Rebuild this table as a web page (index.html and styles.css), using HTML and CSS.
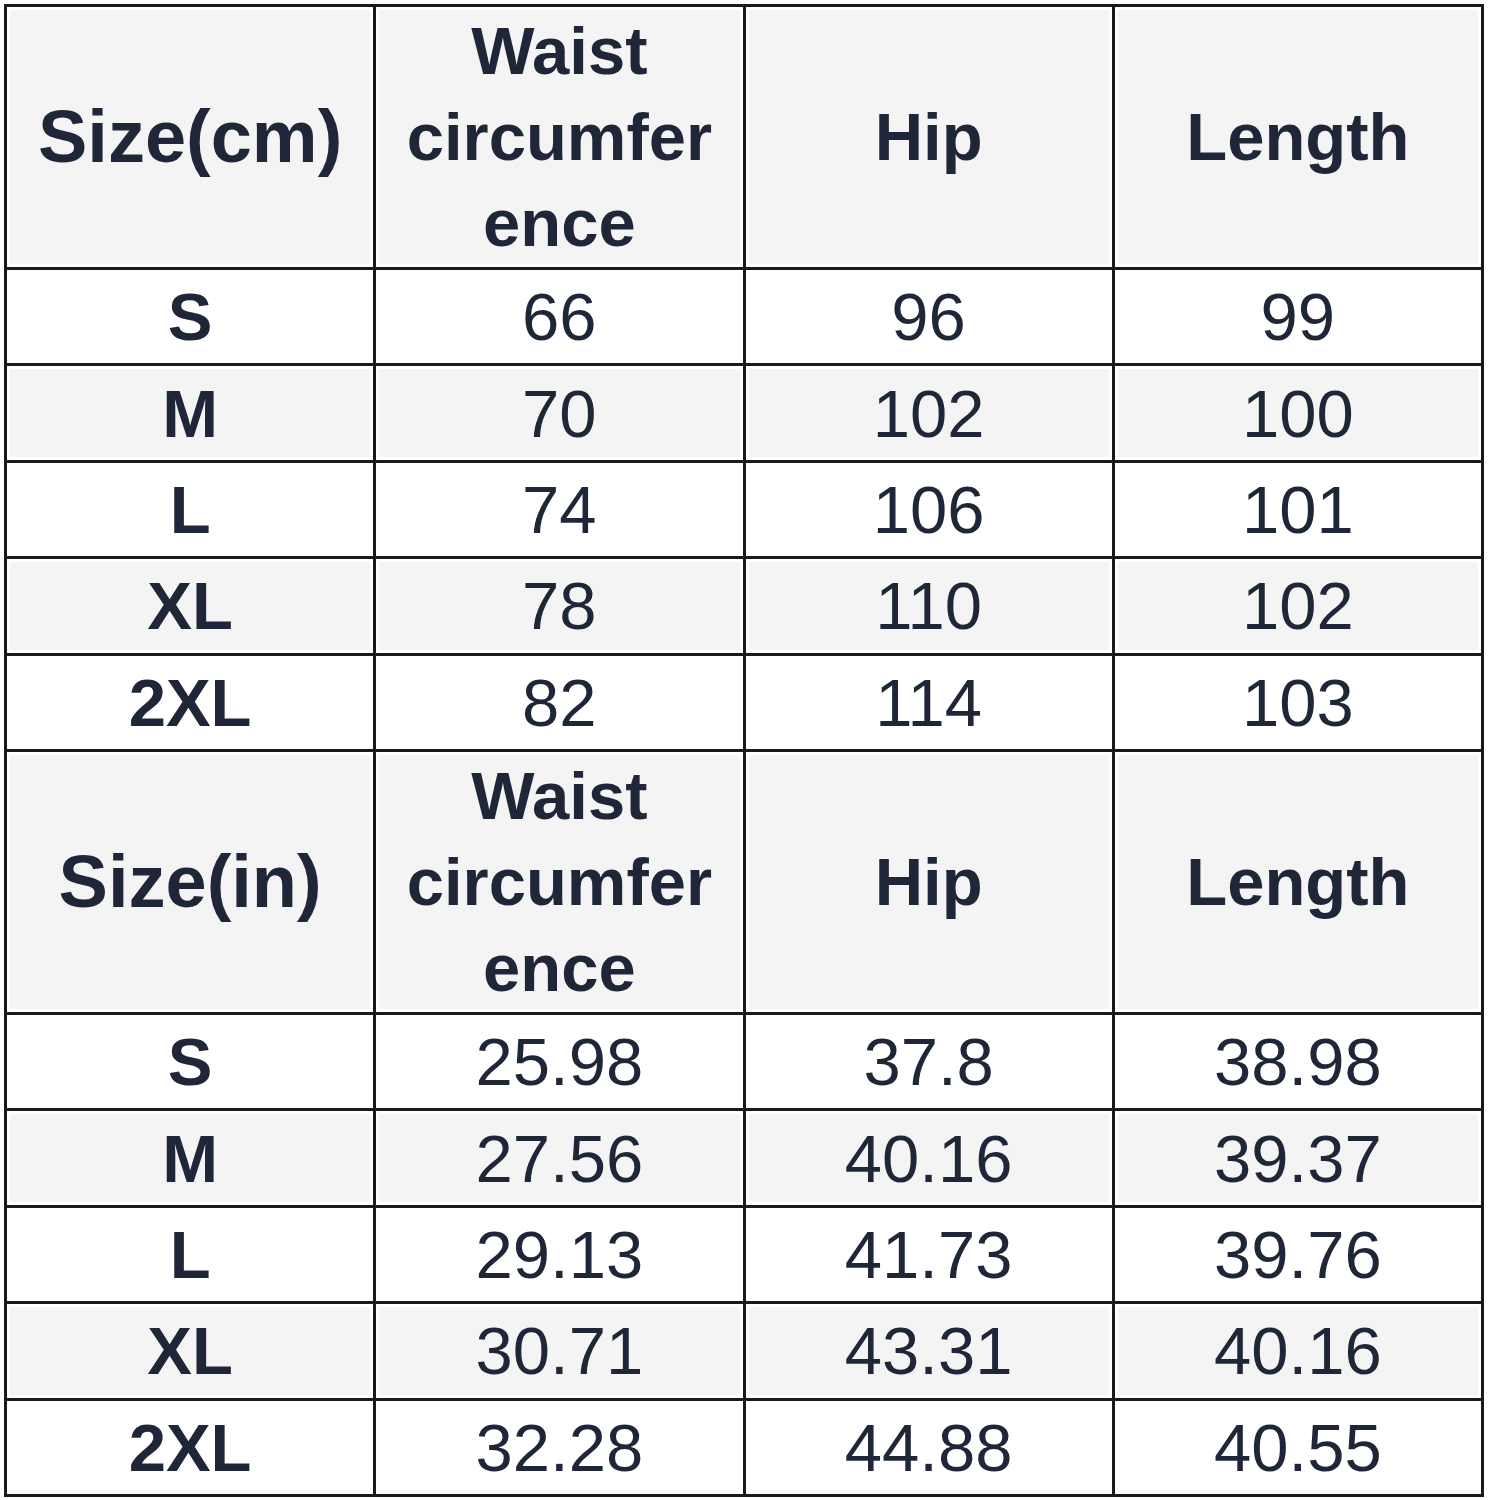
FILE: index.html
```html
<!DOCTYPE html>
<html>
<head>
<meta charset="utf-8">
<link rel="stylesheet" href="styles.css">
</head>
<body>
<table class="chart">
  <colgroup><col class="c"><col class="c"><col class="c"><col class="c"></colgroup>
  <tr class="head"><th class="unit">Size(cm)</th><th>Waist<br>circumfer<br>ence</th><th>Hip</th><th>Length</th></tr>
  <tr class="w"><th>S</th><td>66</td><td>96</td><td>99</td></tr>
  <tr class="g"><th>M</th><td>70</td><td>102</td><td>100</td></tr>
  <tr class="w"><th>L</th><td>74</td><td>106</td><td>101</td></tr>
  <tr class="g"><th>XL</th><td>78</td><td>110</td><td>102</td></tr>
  <tr class="w"><th>2XL</th><td>82</td><td>114</td><td>103</td></tr>
  <tr class="head"><th class="unit">Size(in)</th><th>Waist<br>circumfer<br>ence</th><th>Hip</th><th>Length</th></tr>
  <tr class="w"><th>S</th><td>25.98</td><td>37.8</td><td>38.98</td></tr>
  <tr class="g"><th>M</th><td>27.56</td><td>40.16</td><td>39.37</td></tr>
  <tr class="w"><th>L</th><td>29.13</td><td>41.73</td><td>39.76</td></tr>
  <tr class="g"><th>XL</th><td>30.71</td><td>43.31</td><td>40.16</td></tr>
  <tr class="w"><th>2XL</th><td>32.28</td><td>44.88</td><td>40.55</td></tr>
</table>
</body>
</html>
```
FILE: styles.css
```css
html, body { margin: 0; padding: 0; background: #ffffff; }
body { padding: 4px 0 0 4px; }
.chart {
  border-collapse: collapse;
  width: 1480px;
  table-layout: fixed;
  font-family: "Liberation Sans", Arial, sans-serif;
  color: #1e2637;
}
.chart .c { width: 25%; }
.chart th, .chart td {
  border: 3px solid #1a1a1a;
  text-align: center;
  vertical-align: middle;
  padding: 0;
  height: 93.4px;
  font-size: 67px;
  line-height: 1;
  box-shadow: inset 0 0 0 3px #ffffff;
}
.chart th { font-weight: bold; }
.chart td { font-weight: normal; }
.chart tr.head th { height: 260px; line-height: 86px; background: #f4f4f4; font-size: 67px; }
.chart tr.head th.unit { font-size: 74px; }
.chart tr.g th, .chart tr.g td { background: #f4f4f4; }
.chart tr.w th, .chart tr.w td { background: #ffffff; }
```
